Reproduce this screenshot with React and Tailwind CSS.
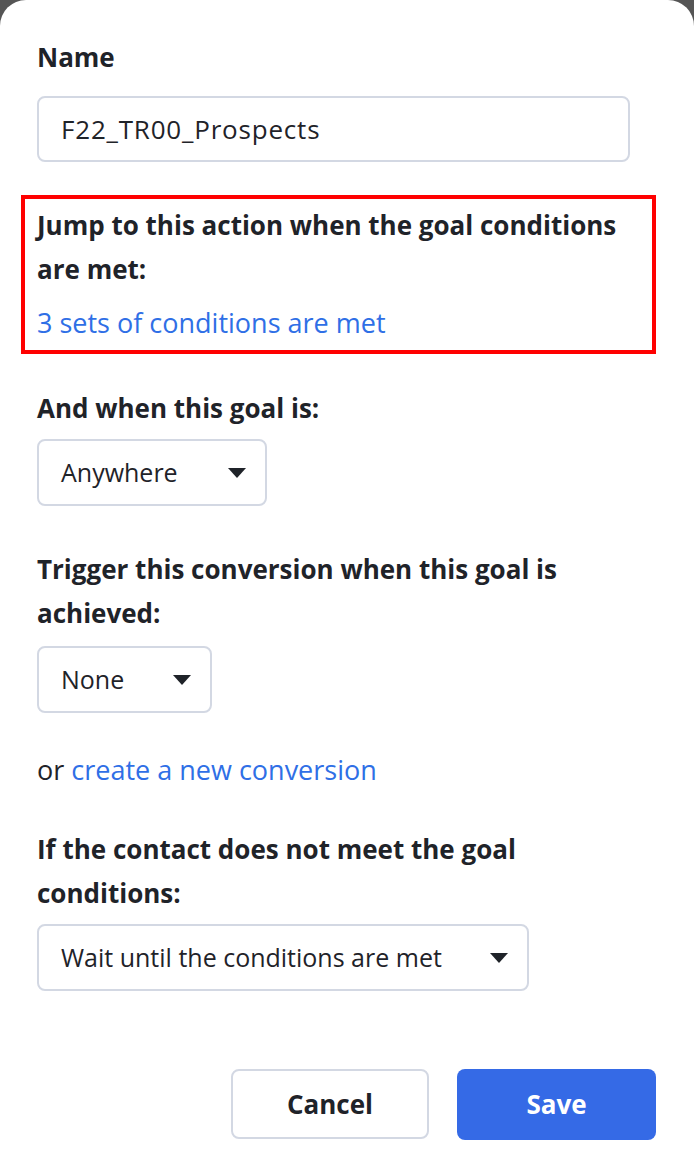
import React from "react";

function Caret() {
  return (
    <svg width="18" height="10" viewBox="0 0 18 10" className="shrink-0">
      <path d="M0 0 L18 0 L9 10 Z" fill="#1f2329" />
    </svg>
  );
}

function Select({ value, width }) {
  return (
    <div
      className={`flex h-[67px] items-center justify-between rounded-lg border-2 border-[#d3d8e3] bg-white pl-[22px] pr-[19px] text-[25px] text-[#1f2329] ${width}`}
    >
      <span>{value}</span>
      <Caret />
    </div>
  );
}

export default function App() {
  return (
    <div className="min-h-[1162px] bg-[#555555]" style={{ fontFamily: "'Open Sans', 'Liberation Sans', sans-serif" }}>
      <div className="min-h-[1162px] rounded-t-[26px] bg-white px-[37px] pt-[35px] text-[#1f2329]">
        {/* Name */}
        <div className="text-[26px] font-bold leading-[44px]">Name</div>
        <div className="mt-[17px] flex h-[66px] w-[593px] items-center rounded-lg border-2 border-[#d3d8e3] px-[22px] text-[26px] tracking-[0.8px]">
          F22_TR00_Prospects
        </div>

        {/* Goal conditions (highlighted) */}
        <div className="-ml-[16px] mt-[33px] w-[635px] border-4 border-[#ff0000] px-[12px] pt-[4px] pb-[5px]">
          <div className="text-[26px] font-bold leading-[44px]">
            Jump to this action when the goal conditions
            <br />
            are met:
          </div>
          <a className="mt-[10px] block text-[27px] leading-[44px] text-[#2f6fe6]" href="#">
            3 sets of conditions are met
          </a>
        </div>

        {/* Location */}
        <div className="mt-[32px] text-[26px] font-bold leading-[44px]">And when this goal is:</div>
        <div className="mt-[9px]">
          <Select value="Anywhere" width="w-[230px]" />
        </div>

        {/* Conversion */}
        <div className="mt-[41px] text-[26px] font-bold leading-[44px]">
          Trigger this conversion when this goal is
          <br />
          achieved:
        </div>
        <div className="mt-[11px]">
          <Select value="None" width="w-[175px]" />
        </div>

        <div className="mt-[35px] text-[27px] leading-[44px]">
          or{" "}
          <a className="text-[#2f6fe6]" href="#">
            create a new conversion
          </a>
        </div>

        {/* Fallback */}
        <div className="mt-[35px] text-[26px] font-bold leading-[44px]">
          If the contact does not meet the goal
          <br />
          conditions:
        </div>
        <div className="mt-[9px]">
          <Select value="Wait until the conditions are met" width="w-[492px]" />
        </div>

        {/* Actions */}
        <div className="mt-[78px] flex justify-end gap-[28px] pr-[1px]">
          <button className="h-[70px] w-[198px] rounded-lg border-2 border-[#d3d8e3] bg-white text-[26px] font-bold text-[#1f2329]">
            Cancel
          </button>
          <button className="h-[71px] w-[199px] rounded-lg bg-[#356ae6] text-[26px] font-bold text-white">
            Save
          </button>
        </div>
      </div>
    </div>
  );
}
